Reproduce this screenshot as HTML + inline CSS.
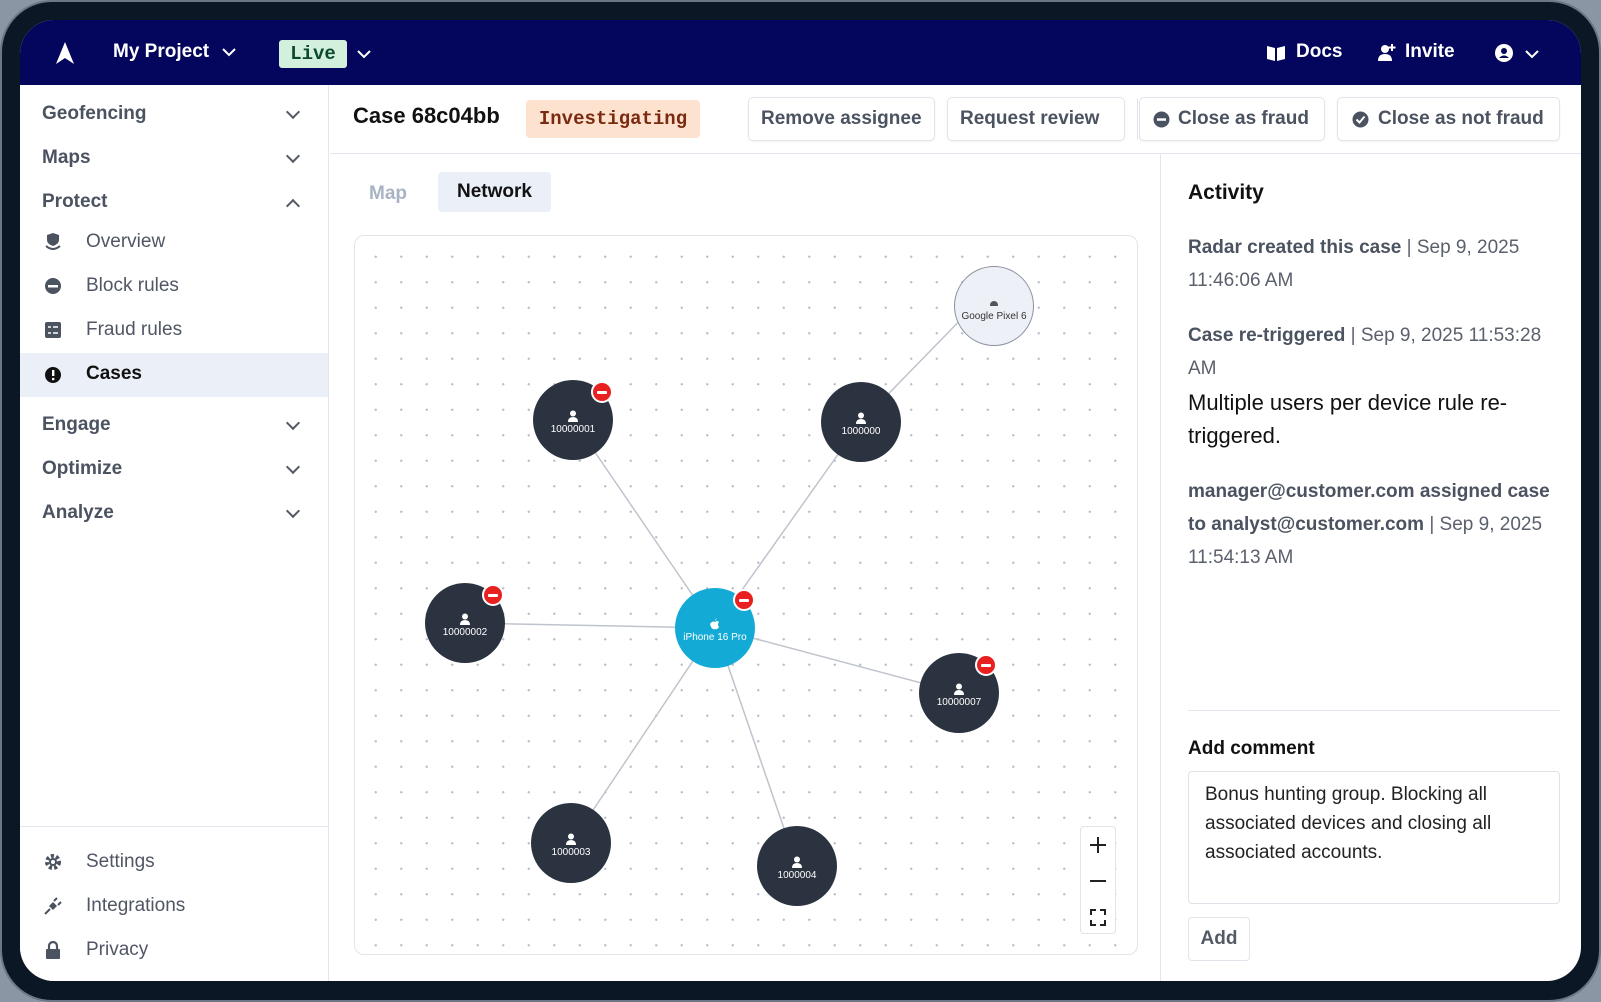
<!DOCTYPE html>
<html><head><meta charset="utf-8"><style>
*{box-sizing:border-box;margin:0;padding:0}
body{width:1601px;height:1002px;background:#8a96a3;font-family:"Liberation Sans",sans-serif;position:relative;overflow:hidden}
.frame{position:absolute;left:0;top:0;width:1601px;height:1002px;border-radius:52px;background:#0b1724;border:2px solid #6b7785}
.screen{position:absolute;left:20px;top:20px;width:1561px;height:961px;border-radius:34px;background:#fff;overflow:hidden}
.nav{position:absolute;left:0;top:0;width:1561px;height:65px;background:#03065c;color:#fff}
.abs{position:absolute}
.nav .t{position:absolute;font-weight:bold;font-size:19px;top:21px}
.side{position:absolute;left:0;top:65px;width:309px;height:896px;border-right:1px solid #e3e6ee;background:#fff}
.sh{position:absolute;left:22px;font-size:19px;font-weight:bold;color:#4b5260}
.si{position:absolute;left:66px;font-size:19px;color:#505664}
.chev{position:absolute;left:268px;width:10px;height:10px;border-right:2px solid #555b66;border-bottom:2px solid #555b66;transform:rotate(45deg)}
.btn{position:absolute;top:77px;height:44px;border:1px solid #e1e4ea;border-radius:5px;background:#fff;font-size:19px;font-weight:bold;color:#4b5260;line-height:42px;padding:0 12px;white-space:nowrap;box-shadow:0 1px 2px rgba(0,0,0,.05)}
.node{position:absolute;width:80px;height:80px;border-radius:50%;background:#2b3340;color:#fff;font-size:10px;text-align:center}
.node .p{display:block;margin:30px auto 2px;width:12px;height:12px}
.badge{position:absolute;width:22px;height:22px;border-radius:50%;background:#e8201f;border:2px solid #fff}
.badge:after{content:"";position:absolute;left:4px;top:8px;width:10px;height:3px;background:#fff;border-radius:1px}
.act{position:absolute;left:1168px;font-size:19px;color:#5a606c;line-height:33px;width:368px}
.act b{color:#4b5260}
</style></head><body>
<div class="frame"></div>
<div class="screen">
 <div class="nav">
  <svg class="abs" style="left:36px;top:22px" width="18" height="22" viewBox="0 0 18 22"><path d="M9 0 L18 22 L9 16 L0 22Z" fill="#fff"/></svg>
  <div class="t" style="left:93px">My Project</div>
  <svg class="abs" style="left:202px;top:28px" width="14" height="9"><path d="M1 1 L7 7 L13 1" stroke="#fff" stroke-width="2" fill="none"/></svg>
  <div class="abs" style="left:259px;top:20px;width:68px;height:28px;background:#d3f0dd;border-radius:3px;color:#0b4a2a;font-family:'Liberation Mono',monospace;font-weight:bold;font-size:19px;text-align:center;line-height:28px">Live</div>
  <svg class="abs" style="left:337px;top:30px" width="14" height="9"><path d="M1 1 L7 7 L13 1" stroke="#fff" stroke-width="2" fill="none"/></svg>
  <svg class="abs" style="left:1247px;top:25px" width="18" height="16"><path d="M0 1 L8 3 L8 16 L0 14Z M10 3 L18 1 L18 14 L10 16Z" fill="#fff"/></svg>
  <div class="t" style="left:1276px">Docs</div>
  <svg class="abs" style="left:1357px;top:23px" width="20" height="19"><circle cx="8" cy="6" r="4" fill="#fff"/><path d="M1 18 Q1 11 8 11 Q15 11 15 18Z" fill="#fff"/><path d="M15 1v7M11.5 4.5h7" stroke="#fff" stroke-width="2"/></svg>
  <div class="t" style="left:1385px">Invite</div>
  <svg class="abs" style="left:1475px;top:24px" width="18" height="18"><circle cx="9" cy="9" r="9" fill="#fff"/><circle cx="9" cy="7" r="3" fill="#03065c"/><path d="M4 14 Q9 9 14 14" fill="#03065c"/></svg>
  <svg class="abs" style="left:1505px;top:30px" width="14" height="9"><path d="M1 1 L7 7 L13 1" stroke="#fff" stroke-width="2" fill="none"/></svg>
 </div>
 <div class="side">
  <div class="sh" style="top:18px">Geofencing</div><div class="chev" style="top:22px"></div>
  <div class="sh" style="top:62px">Maps</div><div class="chev" style="top:66px"></div>
  <div class="sh" style="top:106px">Protect</div><div class="chev" style="top:116px;transform:rotate(225deg)"></div>
  <svg class="abs" style="left:24px;top:147px" width="18" height="18"><path d="M9 1 L15 3 L15 8 Q15 12 9 14 Q3 12 3 8 L3 3Z" fill="#4b5260"/><path d="M2 14 Q9 20 16 14" stroke="#4b5260" stroke-width="2" fill="none"/></svg>
  <div class="si" style="top:146px">Overview</div>
  <svg class="abs" style="left:24px;top:192px" width="18" height="18"><circle cx="9" cy="9" r="8" fill="#4b5260"/><rect x="4" y="8" width="10" height="2.5" fill="#fff"/></svg>
  <div class="si" style="top:190px">Block rules</div>
  <svg class="abs" style="left:24px;top:236px" width="18" height="18"><rect x="1" y="1" width="16" height="16" rx="2" fill="#4b5260"/><path d="M4 6h3M9 6h5M4 12h3M9 12h5" stroke="#fff" stroke-width="1.6"/></svg>
  <div class="si" style="top:234px">Fraud rules</div>
  <div class="abs" style="left:0;top:268px;width:308px;height:44px;background:#ebf0f8"></div>
  <svg class="abs" style="left:24px;top:281px" width="18" height="18"><circle cx="9" cy="9" r="8" fill="#111"/><rect x="8" y="4" width="2.4" height="6" fill="#fff"/><circle cx="9.2" cy="13" r="1.3" fill="#fff"/></svg>
  <div class="si" style="top:278px;font-weight:bold;color:#111">Cases</div>
  <div class="sh" style="top:329px">Engage</div><div class="chev" style="top:333px"></div>
  <div class="sh" style="top:373px">Optimize</div><div class="chev" style="top:377px"></div>
  <div class="sh" style="top:417px">Analyze</div><div class="chev" style="top:421px"></div>
  <div class="abs" style="left:0;top:741px;width:308px;height:1px;background:#e3e6ee"></div>
  <svg class="abs" style="left:24px;top:768px" width="18" height="18"><circle cx="9" cy="9" r="6" fill="none" stroke="#4b5260" stroke-width="4" stroke-dasharray="3 2.2"/><circle cx="9" cy="9" r="4" fill="#4b5260"/><circle cx="9" cy="9" r="2" fill="#fff"/></svg>
  <div class="si" style="top:766px">Settings</div>
  <svg class="abs" style="left:24px;top:812px" width="18" height="18"><path d="M1 17 L6 12" stroke="#4b5260" stroke-width="2"/><path d="M5 9 L9 5 L13 9 L9 13Z" fill="#4b5260"/><path d="M10 4l3-3M14 8l3-3" stroke="#4b5260" stroke-width="2"/></svg>
  <div class="si" style="top:810px">Integrations</div>
  <svg class="abs" style="left:24px;top:855px" width="18" height="20"><path d="M5 9V6a4 4 0 0 1 8 0v3" stroke="#4b5260" stroke-width="2.2" fill="none"/><rect x="2" y="9" width="14" height="10" rx="1" fill="#4b5260"/></svg>
  <div class="si" style="top:854px">Privacy</div>
 </div>
 <div class="abs" style="left:333px;top:83px;font-size:22px;font-weight:bold;color:#111">Case 68c04bb</div>
 <div class="abs" style="left:506px;top:80px;width:174px;height:38px;background:#fde3cf;border-radius:4px;color:#7a2a10;font-family:'Liberation Mono',monospace;font-weight:bold;font-size:19px;line-height:38px;text-align:center">Investigating</div>
 <div class="btn" style="left:728px;width:187px">Remove assignee</div>
 <div class="btn" style="left:927px;width:178px">Request review</div>
 <div class="abs" style="left:1117px;top:78px;width:1px;height:42px;background:#e1e4ea"></div>
 <div class="btn" style="left:1119px;width:186px;padding-left:38px">Close as fraud</div>
 <svg class="abs" style="left:1133px;top:91px" width="17" height="17"><circle cx="8.5" cy="8.5" r="8" fill="#4b5260"/><rect x="4" y="7.3" width="9" height="2.5" fill="#fff"/></svg>
 <div class="btn" style="left:1317px;width:223px;padding-left:40px">Close as not fraud</div>
 <svg class="abs" style="left:1332px;top:91px" width="17" height="17"><circle cx="8.5" cy="8.5" r="8" fill="#4b5260"/><path d="M4.5 8.5l3 3 5-6" stroke="#fff" stroke-width="2" fill="none"/></svg>
 <div class="abs" style="left:310px;top:133px;width:1251px;height:1px;background:#e3e6ee"></div>
 <div class="abs" style="left:1140px;top:134px;width:1px;height:827px;background:#e3e6ee"></div>
 <div class="abs" style="left:349px;top:163px;font-size:19px;font-weight:bold;color:#a8b3c4">Map</div>
 <div class="abs" style="left:418px;top:152px;width:113px;height:40px;background:#ebf0f8;border-radius:4px;font-size:19px;font-weight:bold;color:#111;text-align:center;line-height:40px">Network</div>
 <div class="abs" style="left:334px;top:215px;width:784px;height:720px;border:1px solid #e1e4ea;border-radius:10px;background-color:#fff;background-image:radial-gradient(circle,#b8bec8 1px,transparent 1.3px);background-size:25.5px 25.5px;background-position:8px 8px"></div>
 <svg class="abs" style="left:0;top:0" width="1561" height="961"><g stroke="#bfc4cc" stroke-width="1.5">
  <line x1="695" y1="608" x2="553" y2="400"/><line x1="695" y1="608" x2="841" y2="402"/><line x1="841" y1="402" x2="954" y2="286"/>
  <line x1="695" y1="608" x2="445" y2="603"/><line x1="695" y1="608" x2="939" y2="673"/><line x1="695" y1="608" x2="551" y2="823"/><line x1="695" y1="608" x2="777" y2="846"/></g></svg>
 <div class="node" style="left:934px;top:246px;background:#eef0f8;border:1px solid #8c93a0;color:#333"><svg class="p" viewBox="0 0 12 12"><path d="M2 9 Q2 4 6 4 Q10 4 10 9Z" fill="#555"/></svg>Google Pixel 6</div>
 <div class="node" style="left:513px;top:360px"><svg class="p" viewBox="0 0 12 12"><circle cx="6" cy="3.5" r="3" fill="#fff"/><path d="M1 12Q1 7 6 7Q11 7 11 12Z" fill="#fff"/></svg>10000001</div>
 <div class="badge" style="left:571px;top:361px"></div>
 <div class="node" style="left:801px;top:362px"><svg class="p" viewBox="0 0 12 12"><circle cx="6" cy="3.5" r="3" fill="#fff"/><path d="M1 12Q1 7 6 7Q11 7 11 12Z" fill="#fff"/></svg>1000000</div>
 <div class="node" style="left:405px;top:563px"><svg class="p" viewBox="0 0 12 12"><circle cx="6" cy="3.5" r="3" fill="#fff"/><path d="M1 12Q1 7 6 7Q11 7 11 12Z" fill="#fff"/></svg>10000002</div>
 <div class="badge" style="left:462px;top:564px"></div>
 <div class="node" style="left:655px;top:568px;background:#13abd6"><svg class="p" viewBox="0 0 12 12"><path d="M6 4Q8 2 10 4Q8 6 10 9Q8 12 6 11Q4 12 2 9Q0 5 3 4Q5 3 6 4Z M6 3Q6 1 8 0" fill="#fff"/></svg>iPhone 16 Pro</div>
 <div class="badge" style="left:713px;top:569px"></div>
 <div class="node" style="left:899px;top:633px"><svg class="p" viewBox="0 0 12 12"><circle cx="6" cy="3.5" r="3" fill="#fff"/><path d="M1 12Q1 7 6 7Q11 7 11 12Z" fill="#fff"/></svg>10000007</div>
 <div class="badge" style="left:955px;top:634px"></div>
 <div class="node" style="left:511px;top:783px"><svg class="p" viewBox="0 0 12 12"><circle cx="6" cy="3.5" r="3" fill="#fff"/><path d="M1 12Q1 7 6 7Q11 7 11 12Z" fill="#fff"/></svg>1000003</div>
 <div class="node" style="left:737px;top:806px"><svg class="p" viewBox="0 0 12 12"><circle cx="6" cy="3.5" r="3" fill="#fff"/><path d="M1 12Q1 7 6 7Q11 7 11 12Z" fill="#fff"/></svg>1000004</div>
 <div class="abs" style="left:1060px;top:806px;width:36px;height:108px;border:1px solid #e1e4ea;border-radius:4px;background:#fff"></div>
 <svg class="abs" style="left:1060px;top:806px" width="36" height="108"><path d="M18 11v16M10 19h16M10 55h16" stroke="#222" stroke-width="2"/><path d="M11 89v-5h5M20 84h5v5M25 94v5h-5M16 99h-5v-5" stroke="#222" stroke-width="2" fill="none"/></svg>
 <div class="abs" style="left:1168px;top:161px;font-size:21px;font-weight:bold;color:#111">Activity</div>
 <div class="act" style="top:211px"><b>Radar created this case</b> | Sep 9, 2025 11:46:06 AM</div>
 <div class="act" style="top:299px"><b>Case re-triggered</b> | Sep 9, 2025 11:53:28 AM</div>
 <div class="act" style="top:366px;font-size:22px;color:#111;width:360px">Multiple users per device rule re-triggered.</div>
 <div class="act" style="top:455px;width:362px"><b>manager@customer.com assigned case to analyst@customer.com</b> | Sep 9, 2025 11:54:13 AM</div>
 <div class="abs" style="left:1168px;top:690px;width:372px;height:1px;background:#e3e6ee"></div>
 <div class="abs" style="left:1168px;top:718px;font-size:19px;font-weight:bold;color:#111">Add comment</div>
 <div class="abs" style="left:1168px;top:751px;width:372px;height:133px;border:1px solid #dfe2e8;border-radius:4px;padding:8px 16px;font-size:19px;line-height:29px;color:#222">Bonus hunting group. Blocking all associated devices and closing all associated accounts.</div>
 <div class="abs" style="left:1168px;top:897px;width:62px;height:44px;border:1px solid #e1e4ea;border-radius:4px;font-size:19px;font-weight:bold;color:#555b66;text-align:center;line-height:42px">Add</div>
</div>
</body></html>
